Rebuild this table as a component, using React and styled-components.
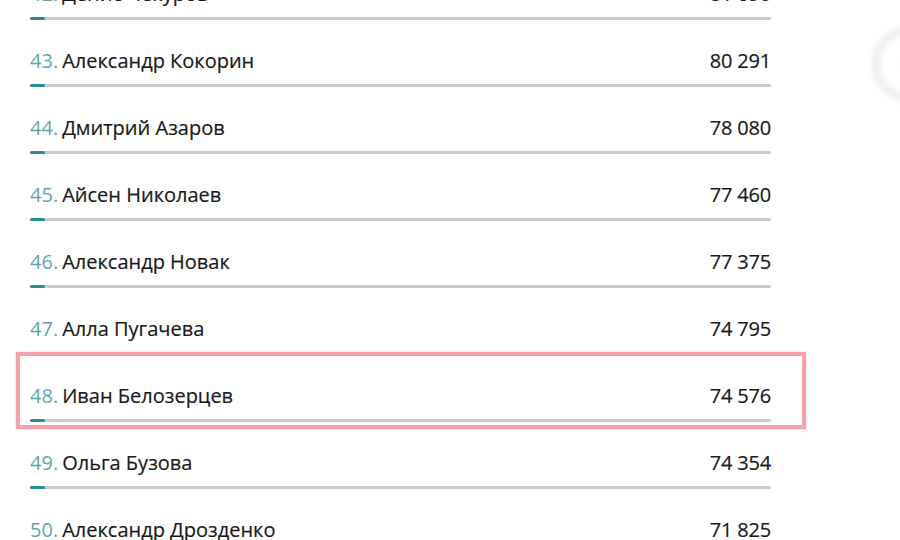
import React from 'react';
import styled, { createGlobalStyle } from 'styled-components';

const GlobalStyle = createGlobalStyle`
    html, body {
        margin: 0;
        padding: 0;
        background: #fff;
        height: 540px;
        overflow: hidden;
    }
`;

const Page = styled.div`
    position: relative;
    width: 900px;
    height: 540px;
    overflow: hidden;
    font-family: "Open Sans", "Noto Sans", sans-serif;
`;

const List = styled.div`
    display: flex;
    flex-direction: column;
    width: 741px;
    margin: -19px 0 0 30px;
`;

const Row = styled.div`
    position: relative;
    height: 67px;
    display: flex;
    flex-direction: column;

    ${({ $marked }) => $marked && `
        &::after {
            content: '';
            position: absolute;
            top: -31px;
            left: -14px;
            right: -35px;
            height: 77px;
            box-sizing: border-box;
            border: 4px solid #f2a3ab;
            box-shadow: 0 0 2px rgba(240, 150, 160, 0.6);
            pointer-events: none;
        }
    `}
`;

const Line = styled.div`
    display: flex;
    align-items: center;
    justify-content: space-between;
    height: 24px;
    font-size: 20px;
    font-weight: 500;
    color: #1a1a1a;
    -webkit-text-stroke: 0.2px #1a1a1a;
`;

const Name = styled.span`
    white-space: nowrap;
`;

const Place = styled.span`
    color: #64a3ac;
    -webkit-text-stroke: 0;
    margin-right: 4px;
`;

const Score = styled.span`
    letter-spacing: -0.2px;
`;

const Track = styled.div`
    margin-top: 12px;
    height: 3px;
    border-radius: 2px;
    background: #cbcbcb;
    display: flex;
`;

const Fill = styled.div`
    width: 15px;
    height: 3px;
    border-radius: 2px;
    background: #2b8c96;
`;

const Ghost = styled.svg`
    position: absolute;
    top: 18px;
    left: 862px;
    opacity: 0.35;
    filter: blur(2px);
`;

const rows = [
    { place: 42, name: 'Денис Чекуров', score: '81 690' },
    { place: 43, name: 'Александр Кокорин', score: '80 291' },
    { place: 44, name: 'Дмитрий Азаров', score: '78 080' },
    { place: 45, name: 'Айсен Николаев', score: '77 460' },
    { place: 46, name: 'Александр Новак', score: '77 375' },
    { place: 47, name: 'Алла Пугачева', score: '74 795' },
    { place: 48, name: 'Иван Белозерцев', score: '74 576', marked: true },
    { place: 49, name: 'Ольга Бузова', score: '74 354' },
    { place: 50, name: 'Александр Дрозденко', score: '71 825' },
];

const App = () => {
    return (
        <Page>
            <GlobalStyle />
            <List>
                {rows.map((r) => (
                    <Row key={r.place} $marked={r.marked}>
                        <Line>
                            <Name>
                                <Place>{r.place}.</Place>
                                {r.name}
                            </Name>
                            <Score>{r.score}</Score>
                        </Line>
                        <Track>
                            <Fill />
                        </Track>
                    </Row>
                ))}
            </List>

            <Ghost width="60" height="90" viewBox="0 0 60 90">
                <path d="M48 12 A34 34 0 0 0 14 46 A34 34 0 0 0 48 80" fill="none" stroke="#d8d8d8" strokeWidth="10" strokeLinecap="round" />
                <path d="M40 46 L60 46" stroke="#e0e0e0" strokeWidth="8" />
            </Ghost>
        </Page>
    );
};

export default App;
